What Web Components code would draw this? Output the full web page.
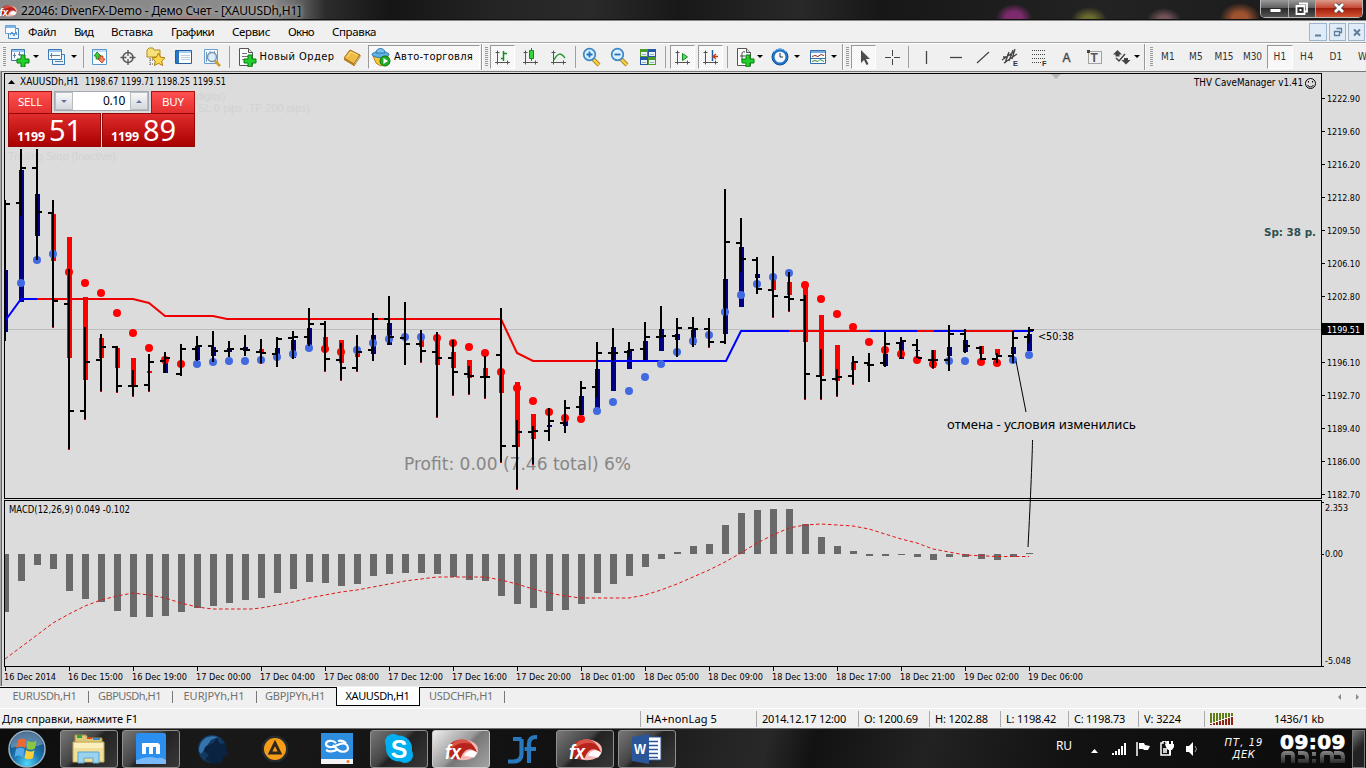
<!DOCTYPE html>
<html lang="ru">
<head>
<meta charset="utf-8">
<title>22046: DivenFX-Demo</title>
<style>
  body {
    margin: 0;
    width: 1366px;
    height: 768px;
    overflow: hidden;
    background: #f0f0f0;
    font: 12px "Noto Sans", "Open Sans", sans-serif;
    color: #000;
  }
</style>
</head>
<body>
<terminal-window></terminal-window>
<script>
// Text set to an exact advance width
class FitLabel extends HTMLElement {
  constructor() {
    super();
    this.attachShadow({mode: 'open'});
    this.shadowRoot.innerHTML = `
      <style>
        :host { display: inline-block; white-space: nowrap; }
        span { display: inline-block; }
      </style>
      <span><slot></slot></span>
    `;
  }

  connectedCallback() {
    const span = this.shadowRoot.querySelector('span');
    const wanted = parseFloat(this.getAttribute('w'));
    const count = this.textContent.length;
    this.style.width = wanted + 'px';
    const natural = span.getBoundingClientRect().width;
    span.style.letterSpacing = ((wanted - natural) / count).toFixed(3) + 'px';
  }
}
customElements.define('fit-label', FitLabel);

const plus = '<path d="M11 8h4v4h4v4h-4v4h-4v-4H7v-4h4z" fill="#22d02c" stroke="#087d10"/>';
const axes = '<path d="M4.500 3.500v14M2.500 5.500h4M2 15.500h15M14.500 13.500v4" fill="none" stroke="#555"/>';
const sheet = '<path d="M2.500 1.500h9l4 4v13h-13z" fill="#fff" stroke="#555"/><path d="M11.500 1.500v4h4" fill="#ddd" stroke="#555"/>';
const fxLogo = `
  <ellipse cx="20" cy="14" rx="16" ry="11" fill="#f4b9b5"/>
  <path d="M4 15C5-1 30-1 35 17c-7-7-14-4-17 5-4 4-12 3-14-7z" fill="#b8231b"/>
  <path d="M8 8c6-7 17-7 22 0-9-3-16-1-22 4z" fill="#d65348"/>
  <path d="M21 20c4-6 9-7 14-3l-3 5z" fill="#fff"/>
  <text x="1" y="24" font-family="Liberation Sans, sans-serif" font-size="21" font-style="italic" font-weight="bold" fill="#fff" textLength="17" lengthAdjust="spacingAndGlyphs">fx</text>`;

const ICONS = {
  chartNew: '<path d="M1.500 2.500h13v11h-13z" fill="#f5faff" stroke="#3b7ab8"/><path d="M2 3h12v2H2z" fill="#9cc6ea"/><path d="M4.500 6v5M3 8.500h3M9.500 5v4M8 7.500h3" stroke="#64819b"/>' + plus,
  profiles: '<path d="M5.500 7.500h12v10h-12z" fill="#e8f3fc" stroke="#3b7ab8"/><path d="M1.500 2.500h13v10h-13z" fill="#f5faff" stroke="#3b7ab8"/><path d="M2 3h12v2H2z" fill="#9cc6ea"/><path d="M3 8.500h10M4.500 6v5M8 14.500h8" stroke="#64819b"/>',
  market: '<path d="M2.500 2.500h14v15h-14z" fill="#f8fcff" stroke="#5598d2"/><path d="M3 3h13v2H3z" fill="#c4def5"/><path d="M7 5l4 4H9v3H6V9H4z" fill="#3ecb38" stroke="#187c13" stroke-width=".8"/><path d="M12 16l-4-4h2V9h3v3h2z" fill="#f98b5c" stroke="#b43411" stroke-width=".8"/>',
  target: '<circle cx="10" cy="10.500" r="5" fill="none" stroke="#555" stroke-width="1.500"/><path d="M10 3v6M10 12v6M2.500 10.500h6M11.500 10.500h6" stroke="#555" stroke-width="1.300"/>',
  star: '<path d="M1 3l2-2h4l1 2h6v7H1z" fill="#f7e17a" stroke="#b28d20"/><path d="M4 11v7M4 13h5M4 17h5" stroke="#555" stroke-dasharray="1 1"/><path d="M12.500 6l2 4.200 4.500.6-3.300 3.200.9 4.500-4.100-2.200-4.100 2.200.9-4.500L6 10.800l4.500-.6z" fill="#ffd84a" stroke="#ad7e0b"/>',
  navigator: '<path d="M1.500 3.500h16v13h-16z" fill="#fff" stroke="#225e9d"/><path d="M2 4h3v12H2z" fill="#2c77c4"/><path d="M5 4h12v2H5z" fill="#a5cef1"/><path d="M7 8.500h9M7 10.500h9M7 12.500h9" stroke="#b8cfe6"/>',
  tester: '<path d="M2.500 2.500h13v14h-13z" fill="#f3f9ff" stroke="#6aa0cf"/><path d="M4.500 5v10M8 4v6M12.500 4v7" stroke="#7799bb"/><circle cx="10" cy="10" r="4.500" fill="#d9edfb" fill-opacity=".85" stroke="#7895ad" stroke-width="1.500"/><path d="M13 14l5 5" stroke="#d19b29" stroke-width="2.500"/>',
  order: sheet + '<path d="M5 6.500h5M5 9.500h6M5 12.500h4" stroke="#777"/>' + plus,
  book: '<path d="M2 11L8 3l10 5-6 9z" fill="#eebb45" stroke="#9a6a13"/><path d="M2 11l10 6v2L2 13z" fill="#b57d1c"/><path d="M12 17l6-9v2l-6 9z" fill="#fff0c0" stroke="#9a6a13" stroke-width=".7"/><path d="M5 10l4-5 6 3" fill="none" stroke="#ffe08b"/>',
  auto: '<path d="M2 9h15l-2 7-5 3-5-3z" fill="#f3c83f" stroke="#b4871b"/><ellipse cx="9.500" cy="7.500" rx="8.500" ry="3" fill="#62b0e5" stroke="#2c78b2"/><path d="M5 6c0-6 9-6 9 0z" fill="#7bc3ef" stroke="#2c78b2"/><circle cx="14" cy="14" r="5" fill="#1fae26" stroke="#0b7411"/><path d="M12.500 11v6l4.500-3z" fill="#fff"/>',
  bars: axes + '<path d="M10.500 4v10M8 11.500h3M11 6.500h3" stroke="#138a21" stroke-width="1.500" fill="none"/>',
  candle: axes + '<path d="M10.500 1v13" stroke="#138a21"/><path d="M8.500 3.500h4v8h-4z" fill="#35d43d" stroke="#138a21"/>',
  line: axes + '<path d="M5 13c4-8 7-7 11-2" stroke="#2b9c37" stroke-width="1.500" fill="none"/>',
  zoomIn: '<path d="M11 12l6 6" stroke="#9d7113" stroke-width="4"/><path d="M11 12l6 6" stroke="#f5cf3d" stroke-width="2.500"/><circle cx="7.500" cy="7.500" r="5.800" fill="#d8f0ff" stroke="#3b86c7" stroke-width="1.700"/><path d="M4.500 7.500h6M7.500 4.500v6" stroke="#2471bd" stroke-width="1.800"/>',
  zoomOut: '<path d="M11 12l6 6" stroke="#9d7113" stroke-width="4"/><path d="M11 12l6 6" stroke="#f5cf3d" stroke-width="2.500"/><circle cx="7.500" cy="7.500" r="5.800" fill="#d8f0ff" stroke="#3b86c7" stroke-width="1.700"/><path d="M4.500 7.500h6" stroke="#2471bd" stroke-width="1.800"/>',
  tile: '<path d="M2 2h8v8H2zM10 10h8v8h-8z" fill="#4d9b26"/><path d="M10 2h8v8h-8zM2 10h8v8H2z" fill="#2458aa"/><path d="M3 5h6v4H3zM11 5h6v4h-6zM3 13h6v4H3zM11 13h6v4h-6z" fill="#e8f1f8"/><path d="M4 7.500h4M12 7.500h4M4 15.500h4M12 15.500h4" stroke="#9ab1c8"/>',
  scroll: axes + '<path d="M9.500 6.500v7l5-3.500z" fill="#65d568" stroke="#138a21"/>',
  shift: axes + '<path d="M11.500 3v11" stroke="#225e9d" stroke-width="1.500"/><path d="M12 9.500h5M15 7l-3 2.500 3 2.500" stroke="#c03b16" fill="none" stroke-width="1.300"/>',
  indicators: sheet + '<path d="M10 5c-3-1-3 1-3 3v6M5 9h5" stroke="#444" fill="none"/>' + plus,
  clock: '<circle cx="10" cy="10" r="8" fill="#1f72c6" stroke="#12539c"/><circle cx="10" cy="10" r="5.500" fill="#f2f8fd"/><path d="M10 6v4h3" stroke="#333" fill="none"/><path d="M4 5c3-4 9-4 12 0" stroke="#76bdf4" fill="none"/>',
  template: '<path d="M2.500 3.500h15v13h-15z" fill="#fff" stroke="#2f6dab"/><path d="M3 4h14v2H3z" fill="#76abe0"/><path d="M4 9.500l3-1 3 1 3-2 3 1" stroke="#8e3022" fill="none"/><path d="M3 11.500h14" stroke="#2f6dab"/><path d="M4 14.500l3-1 3 1 2-2 4 2" stroke="#268b39" fill="none"/>',
  cursor: '<path d="M7 3v13l3-3 2.500 5 2-1-2.500-5h4z" fill="#4c4c4c"/>',
  cross: '<path d="M10.500 3v6M10.500 12v6M3 10.500h6M12 10.500h6" stroke="#444"/>',
  vline: '<path d="M10.500 4v13" stroke="#444" stroke-width="1.300"/>',
  hline: '<path d="M4 10.500h12" stroke="#444" stroke-width="1.300"/>',
  trend: '<path d="M4 16L16 5" stroke="#444" stroke-width="1.200"/>',
  channel: '<path d="M1 13L14 4M3 16L16 7M4 16L8 5M8 14L12 3M11 12L14 2M2 10h5M6 8h5" stroke="#444" stroke-width="1.300"/><text x="12" y="19" font-family="Liberation Sans, sans-serif" font-size="7.500" font-weight="bold" fill="#333">E</text>',
  fibo: '<path d="M3 3.500h14M3 7.500h14M3 11.500h14M3 15.500h9" stroke="#444" stroke-dasharray="1 1"/><text x="13" y="19" font-family="Liberation Sans, sans-serif" font-size="7.500" font-weight="bold" fill="#333">F</text>',
  letter: '<text x="5.500" y="15" font-family="Liberation Sans, sans-serif" font-size="13" stroke="#444" stroke-width=".4" textLength="8" lengthAdjust="spacingAndGlyphs" fill="#444">A</text>',
  textBox: '<path d="M3.500 4.500h13v12h-13z" fill="none" stroke="#555" stroke-dasharray="1 1"/><path d="M2 3h3v3H2z" fill="#444"/><text x="5.500" y="15" font-family="Liberation Sans, sans-serif" font-size="12" font-weight="bold" fill="#555" textLength="9">T</text>',
  arrows: '<path d="M5.500 3L10 7.500H7.500v2h-4v-2H1z" fill="#444"/><path d="M14 17.500L9.500 13H12v-2h4v2h2.500z" fill="#444"/><path d="M4 11l3 3 6-7" fill="none" stroke="#444" stroke-width="1.500"/>'
};

class ToolButton extends HTMLElement {
  constructor() {
    super();
    this.attachShadow({mode: 'open'});
    const icon = ICONS[this.getAttribute('icon')];
    this.shadowRoot.innerHTML = `
      <style>
        :host {
          display: flex;
          flex: none;
          align-items: center;
          justify-content: center;
          box-sizing: border-box;
          height: 24px;
          width: ${this.getAttribute('w')}px;
        }
        :host([pressed]) {
          background: repeating-conic-gradient(#fff 0 25%, #f1f1f1 0 50%) 0 0 / 2px 2px;
          border: 1px solid #fff;
          border-top-color: #999;
          border-left-color: #999;
        }
        svg { flex: none; display: block; }
      </style>
      ${icon ? `<svg width="20" height="20" viewBox="0 0 20 20">${icon}</svg>` : ''}
      <slot></slot>
    `;
  }
}

class ToolSeparator extends HTMLElement {
  constructor() {
    super();
    this.attachShadow({mode: 'open'});
    this.shadowRoot.innerHTML = `
      <style>
        :host { display: flex; flex: none; justify-content: center; align-items: center; width: ${this.getAttribute('w') || 8}px; height: 24px; }
        i { flex: none; width: 1px; height: 22px; background: #a0a0a0; }
        :host([kind="grip"]) i { width: 3px; height: 19px; background: repeating-linear-gradient(#999 0 1px, #f0f0f0 1px 2px); }
        :host([kind="arrow"]) i { width: 0; height: 0; background: none; border: 3px solid transparent; border-top: 3px solid #000; border-bottom: 0; }
        :host([kind="end"]) i { height: 26px; background: #999; border-right: 1px solid #fff; }
      </style>
      <i></i>
    `;
  }
}

class ToolBar extends HTMLElement {
  constructor() {
    super();
    this.attachShadow({mode: 'open'});
    this.shadowRoot.innerHTML = `
      <style>
        :host {
          display: flex;
          align-items: center;
          box-sizing: border-box;
          height: 28px;
          width: 1366px;
          padding-bottom: 2px;
          overflow: hidden;
          background: #f0f0f0;
          border-top: 1px solid #fff;
          font: 11px "DejaVu Sans Condensed", "DejaVu Sans", sans-serif;
        }
        .tf { color: #333; font-size: 10px; }
      </style>
      <tool-separator kind="grip" w="8"></tool-separator>
      <tool-button icon="chartNew" w="23"></tool-button>
      <tool-separator kind="arrow" w="9"></tool-separator>
      <tool-button icon="profiles" w="33"></tool-button>
      <tool-separator kind="arrow" w="1"></tool-separator>
      <tool-separator w="18"></tool-separator>
      <tool-button icon="market" w="15"></tool-button>
      <tool-button icon="target" w="42"></tool-button>
      <tool-button icon="star" w="14"></tool-button>
      <tool-button icon="navigator" w="42"></tool-button>
      <tool-button icon="tester" w="14"></tool-button>
      <tool-separator w="20"></tool-separator>
      <tool-button icon="order" w="16"></tool-button>
      <tool-button w="84"><fit-label w="75">Новый Ордер</fit-label></tool-button>
      <tool-button icon="book" w="25"></tool-button>
      <tool-button icon="auto" w="112" pressed style="margin-left:4px"><fit-label w="79" style="margin:0 4px 0 3px">Авто-торговля</fit-label></tool-button>
      <tool-separator kind="end" w="3"></tool-separator>
      <tool-separator kind="grip" w="6"></tool-separator>
      <tool-button icon="bars" w="25" pressed style="margin-left:1px"></tool-button>
      <tool-button icon="candle" w="31"></tool-button>
      <tool-button icon="line" w="26"></tool-button>
      <tool-separator w="7"></tool-separator>
      <tool-button icon="zoomIn" w="26"></tool-button>
      <tool-button icon="zoomOut" w="30"></tool-button>
      <tool-button icon="tile" w="26"></tool-button>
      <tool-separator w="8"></tool-separator>
      <tool-button icon="scroll" w="25" pressed style="margin-left:1px"></tool-button>
      <tool-button icon="shift" w="25" pressed style="margin-left:3px"></tool-button>
      <tool-separator w="8"></tool-separator>
      <tool-button icon="indicators" w="27"></tool-button>
      <tool-separator kind="arrow" w="3"></tool-separator>
      <tool-button icon="clock" w="38"></tool-button>
      <tool-separator kind="arrow" w="1" style="margin-left:-3px"></tool-separator>
      <tool-button icon="template" w="42"></tool-button>
      <tool-separator kind="arrow" w="1" style="margin-left:-6px"></tool-separator>
      <tool-separator kind="end" w="17"></tool-separator>
      <tool-separator kind="grip" w="6" style="margin-left:-7px"></tool-separator>
      <tool-button icon="cursor" w="25" pressed style="margin-left:1px"></tool-button>
      <tool-button icon="cross" w="32"></tool-button>
      <tool-separator w="1"></tool-separator>
      <tool-button icon="vline" w="33"></tool-button>
      <tool-button icon="hline" w="27"></tool-button>
      <tool-button icon="trend" w="28"></tool-button>
      <tool-button icon="channel" w="28"></tool-button>
      <tool-button icon="fibo" w="28"></tool-button>
      <tool-button icon="letter" w="28"></tool-button>
      <tool-button icon="textBox" w="28"></tool-button>
      <tool-button icon="arrows" w="26"></tool-button>
      <tool-separator kind="arrow" w="3"></tool-separator>
      <tool-separator kind="end" w="14"></tool-separator>
      <tool-separator kind="grip" w="6" style="margin-left:-4px"></tool-separator>
      <tool-button class="tf" w="28"><fit-label w="14">M1</fit-label></tool-button>
      <tool-button class="tf" w="28"><fit-label w="14">M5</fit-label></tool-button>
      <tool-button class="tf" w="28"><fit-label w="19">M15</fit-label></tool-button>
      <tool-button class="tf" w="29"><fit-label w="19">M30</fit-label></tool-button>
      <tool-button class="tf" w="26" pressed><fit-label w="13">H1</fit-label></tool-button>
      <tool-button class="tf" w="28"><fit-label w="14">H4</fit-label></tool-button>
      <tool-button class="tf" w="30"><fit-label w="13">D1</fit-label></tool-button>
      <tool-button class="tf" w="28"><fit-label w="14">W1</fit-label></tool-button>
    `;
  }
}

class TitleBar extends HTMLElement {
  constructor() {
    super();
    this.attachShadow({mode: 'open'});
    this.shadowRoot.innerHTML = `
      <style>
        :host {
          display: flex;
          align-items: flex-start;
          height: 20px;
          border-bottom: 1px solid #888;
          box-shadow: inset 0 -1px #111;
          background:
            radial-gradient(ellipse 18px 14px at 1014px 18px, #7d2a6d 45%, transparent),
            radial-gradient(ellipse 18px 13px at 1089px 20px, #6b6b2e 30%, transparent),
            radial-gradient(ellipse 17px 12px at 1164px 20px, #74545a 30%, transparent),
            radial-gradient(ellipse 20px 15px at 1240px 18px, #a0532f 35%, transparent),
            radial-gradient(ellipse 30px 8px at 190px 20px, #aa7c74, transparent),
            linear-gradient(90deg, #888 0, #8b8b8b 270px, #6b6b6b 295px, #2c2c2c 325px, #151515 390px, #252525 500px, #2a2a2a 590px, #181818 680px, #292929 800px, #171717 880px, #232323 1100px, #191919);
          overflow: hidden;
        }
        .logo { margin: 4px 4px 0 -1px; }
        .name { flex: 1; line-height: 21px; font-size: 12px; text-shadow: 0 0 4px #bbb, 0 0 6px #aaa; }
        .controls {
          display: flex;
          height: 17px;
          margin: 0 3px 0 0;
          border: 1px solid #b8b8b8;
          border-top: 0;
          border-radius: 0 0 5px 5px;
          overflow: hidden;
        }
        .controls svg { display: block; background: linear-gradient(#999, #606060 45%, #292929 50%, #555); border-right: 1px solid #aaa; }
        .controls svg.close { background: linear-gradient(#dc9b8b, #c54a35 45%, #a31d0c 50%, #d15333); border: 0; }
      </style>
      <svg class="logo" width="18" height="13" viewBox="0 0 36 26">${fxLogo}</svg>
      <div class="name"><fit-label w="280">22046: DivenFX-Demo - Демо Счет - [XAUUSDh,H1]</fit-label></div>
      <div class="controls">
        <svg width="27" height="17"><rect x="9.500" y="9" width="10" height="3" fill="#fff"/></svg>
        <svg width="26" height="17"><path d="M10 3.500h8v8h-2M7.500 6h8v8h-8z" fill="none" stroke="#fff" stroke-width="1.800"/><path d="M10.500 9h2v2h-2z" fill="#fff"/></svg>
        <svg class="close" width="46" height="17"><path d="M19 4l8 8M27 4l-8 8" stroke="#444" stroke-width="4.500"/><path d="M19 4l8 8M27 4l-8 8" stroke="#fff" stroke-width="2.800"/></svg>
      </div>
    `;
  }
}

class MenuBar extends HTMLElement {
  constructor() {
    super();
    this.attachShadow({mode: 'open'});
    this.shadowRoot.innerHTML = `
      <style>
        :host {
          display: flex;
          align-items: center;
          box-sizing: border-box;
          height: 22px;
          background: #f0f0f0;
          border-bottom: 1px solid #a5a5a5;
          font-size: 11.500px;
        }
        nav { display: flex; gap: 18px; flex: 1; margin-left: 8px; }
        .mdi { display: flex; gap: 2px; margin-right: 1px; }
        .mdi svg { box-sizing: border-box; border: 1px solid #9db5ca; background: #dfecf8; }
      </style>
      <svg width="16" height="16" viewBox="0 0 16 16" style="margin-left:4px"><path d="M4.500 4.500h10v10h-10z" fill="#eef6fd" stroke="#4a87bd"/><path d="M1.500 1.500h10v8h-10z" fill="#f8fbff" stroke="#69a4d8"/><path d="M2 2h9v2H2z" fill="#7eb5e5"/><path d="M6 11l2-3 2 4 2-4 1 3" fill="none" stroke="#4a87bd"/></svg>
      <nav>
        <fit-label w="28">Файл</fit-label>
        <fit-label w="19">Вид</fit-label>
        <fit-label w="42">Вставка</fit-label>
        <fit-label w="43">Графики</fit-label>
        <fit-label w="38">Сервис</fit-label>
        <fit-label w="26">Окно</fit-label>
        <fit-label w="44">Справка</fit-label>
      </nav>
      <div class="mdi">
        <svg width="18" height="18"><path d="M5 11.500h6" stroke="#607d99" stroke-width="2"/></svg>
        <svg width="17" height="18"><path d="M6.500 4.500h5v4h-2M4.500 7.500h5v4h-5z" stroke="#607d99" stroke-width="1.300" fill="none"/></svg>
        <svg width="17" height="18"><path d="M5 5.500l6 6M11 5.500l-6 6" stroke="#607d99" stroke-width="2"/></svg>
      </div>
    `;
  }
}

// [high, low, open, close, body top, body bottom, body colour, dot, dot colour] in pixels
const N = '#000080', R = '#ff0000', B = '#4169e1';
const BARS = [
  [200, 341, null, 204, 270, 332, N, null, B], [149, 216, 203, 168, 170, 302, N, 283, B],
  [149, 260, 168, 212, 194, 236, N, 260, B], [200, 327, 213, 301, 214, 261, R, 254, B],
  [269, 449, 304, 411, 237, 358, R, 272, R], [327, 419, 411, 362, 297, 380, R, 283, R],
  [334, 391, 360, 347, 338, 358, R, 293, R], [346, 392, 347, 386, 348, 368, R, 313, R],
  [370, 396, 386, 386, 358, 385, R, 333, R], [354, 391, 385, 362, 371, 373, R, 348, R],
  [352, 373, 361, 358, 362, 373, N, 360, R], [344, 376, 374, 349, 0, 0, N, 364, R],
  [336, 361, 349, 346, 346, 360, N, 364, B], [331, 362, 346, 351, 347, 356, N, 362, B],
  [341, 357, 351, 349, 348, 352, N, 361, B], [335, 356, 349, 350, 347, 351, N, 361, B],
  [339, 363, 352, 353, 349, 353, R, 360, B], [337, 367, 354, 339, 348, 356, N, 357, B],
  [331, 359, 338, 337, 340, 358, N, 354, B], [308, 346, 337, 324, 328, 346, N, 348, B],
  [321, 371, 324, 359, 337, 346, R, 349, R], [343, 380, 360, 368, 340, 363, R, 352, R],
  [335, 371, 368, 352, 352, 357, R, 350, B], [313, 361, 350, 319, 335, 354, N, 343, B],
  [296, 345, 319, 337, 323, 345, N, 339, B], [302, 365, 338, 344, 0, 0, N, 337, B],
  [330, 362, 344, 351, 340, 347, R, 337, B], [332, 417, 352, 358, 335, 365, R, 338, R],
  [340, 395, 358, 372, 352, 368, R, 343, R], [366, 394, 374, 376, 360, 378, R, 347, R],
  [356, 398, 377, 377, 368, 377, R, 353, R], [308, 462, 355, 446, 370, 393, R, 372, R],
  [420, 489, 446, 432, 382, 447, R, 388, R], [426, 464, 432, 431, 414, 439, R, 401, R],
  [408, 441, 431, 421, 425, 427, N, 412, R], [400, 433, 423, 408, 421, 426, N, 418, R],
  [381, 415, 407, 388, 396, 415, N, 419, R], [342, 397, 387, 353, 369, 408, N, 411, B],
  [328, 361, 353, 353, 347, 391, N, 402, B], [342, 357, 352, 350, 350, 369, N, 391, B],
  [322, 360, 349, 337, 341, 361, N, 377, B], [306, 338, 337, 336, 329, 351, N, 364, B],
  [318, 357, 336, 328, 334, 340, N, 352, B], [317, 347, 328, 329, 330, 345, N, 341, B],
  [318, 347, 329, 342, 0, 0, R, 335, B], [189, 344, 342, 242, 279, 334, N, 312, B],
  [218, 272, 243, 259, 247, 307, N, 295, B], [257, 294, 260, 289, 274, 278, N, 284, B],
  [256, 317, 290, 296, 280, 290, R, 277, B], [272, 311, 297, 299, 282, 295, R, 273, B],
  [295, 399, 300, 374, 286, 342, R, 285, R], [349, 399, 376, 380, 315, 376, R, 299, R],
  [369, 396, 379, 377, 345, 381, R, 314, R], [356, 384, 376, 362, 362, 370, R, 327, R],
  [353, 382, 363, 365, 364, 366, N, 342, R], [332, 367, 363, 344, 354, 366, N, 350, R],
  [337, 359, 343, 341, 342, 359, N, 354, R], [339, 358, 345, 358, 350, 351, N, 360, R],
  [350, 368, 360, 360, 350, 368, R, 364, R], [325, 371, 360, 334, 347, 356, N, 361, B],
  [329, 353, 334, 346, 340, 352, N, 361, B], [346, 360, 348, 359, 346, 354, R, 362, R],
  [353, 363, 359, 356, 349, 355, R, 363, R], [331, 363, 356, 338, 347, 354, N, 360, B],
  [327, 343, 337, 330, 334, 351, N, 355, B]
];

const MACD = [
  612, 581, 565, 569, 591, 599, 602, 611, 617, 617, 616, 612, 608, 606, 603, 600, 598, 593, 589, 582, 583, 586,
  584, 576, 574, 573, 573, 574, 577, 580, 581, 596, 604, 608, 611, 610, 604, 593, 584, 576, 567, 559, 552, 546,
  544, 525, 513, 510, 509, 509, 524, 537, 546, 551, 556, 556, 555, 557, 560, 557, 557, 559, 560, 557, 553
];

const SIGNAL = '5,659 21,647 37,635 53,623 69,614 85,606 101,600 117,596 133,593 149,595 165,598 181,603 197,607 213,609 251,609 261,608 277,605 293,602 309,598 325,595 341,592 357,590 373,587 389,584 405,581 421,579 437,577 485,577 501,580 517,584 533,589 549,593 565,596 581,598 629,598 645,595 661,590 677,584 693,577 709,570 725,562 741,553 757,543 773,535 789,528 805,525 821,524 837,525 853,526 869,529 885,534 901,539 917,543 933,549 949,552 965,555 997,556.500 1029,556.500';

const AVERAGE = [
  ['#0000ff', '5,321 21,299 38,299'],
  ['#e00', '37,299 133,299 149,303 165,316 213,316 227,319 501,319 517,353 533,361 597,361'],
  ['#0000ff', '597,361 726,361 741,331 789,331'], ['#e00', '789,331 870,331'], ['#0000ff', '870,331 917,331'],
  ['#e00', '917,331 934,331'], ['#0000ff', '934,331 965,331'], ['#e00', '965,331 1013,331'], ['#0000ff', '1013,331 1033,331']
];

const PRICES = [[98, '1222.90'], [131, '1219.60'], [164, '1216.20'], [197, '1212.80'], [230, '1209.50'], [263, '1206.10'],
  [296, '1202.80'], [362, '1196.10'], [395, '1192.70'], [428, '1189.40'], [461, '1186.00'], [494, '1182.70']];

const TIMES = ['16 Dec 2014', '16 Dec 15:00', '16 Dec 19:00', '17 Dec 00:00', '17 Dec 04:00', '17 Dec 08:00', '17 Dec 12:00',
  '17 Dec 16:00', '17 Dec 20:00', '18 Dec 01:00', '18 Dec 05:00', '18 Dec 09:00', '18 Dec 13:00', '18 Dec 17:00',
  '18 Dec 21:00', '19 Dec 02:00', '19 Dec 06:00'];

class TradePanel extends HTMLElement {
  constructor() {
    super();
    this.attachShadow({mode: 'open'});
    this.shadowRoot.innerHTML = `
      <style>
        :host { display: grid; grid-template-columns: 93px 93px; column-gap: 1px; width: 187px; height: 56px; color: #fff; position: relative; font-family: "Noto Sans", sans-serif; }
        .side { display: flex; flex-direction: column; }
        .side.buy { align-items: flex-end; }
        .tab {
          box-sizing: border-box;
          width: 44px;
          height: 22px;
          line-height: 19px;
          text-align: center;
          font-size: 11.500px;
          background: linear-gradient(#ff5050, #e32f2f);
          border: 1px solid #a81111;
          border-bottom: 0;
        }
        .price {
          box-sizing: border-box;
          width: 93px;
          height: 34px;
          display: flex;
          align-items: flex-end;
          padding-left: 8px;
          gap: 4px;
          background: linear-gradient(#e02c2c, #a90000);
          border: 1px solid #960808;
        }
        .small { font-size: 12.500px; font-weight: bold; line-height: 18px; }
        .big { font-size: 29px; line-height: 32px; }
        .volume {
          position: absolute;
          left: 46px;
          top: 0;
          display: flex;
          box-sizing: border-box;
          width: 95px;
          height: 20px;
          border: 1px solid #a4aab2;
          background: #fff;
          color: #000;
        }
        .spin { width: 18px; display: flex; align-items: center; justify-content: center; background: linear-gradient(#f8f8f8, #d5d8dd); border: 1px solid #b8bdc4; box-sizing: border-box; }
        .lot { flex: 1; text-align: right; line-height: 18px; padding-right: 5px; }
      </style>
      <div class="side">
        <div class="tab"><fit-label w="24">SELL</fit-label></div>
        <div class="price"><fit-label class="small" w="28">1199</fit-label><fit-label class="big" w="33">51</fit-label></div>
      </div>
      <div class="side buy">
        <div class="tab"><fit-label w="22">BUY</fit-label></div>
        <div class="price"><fit-label class="small" w="28">1199</fit-label><fit-label class="big" w="33">89</fit-label></div>
      </div>
      <div class="volume">
        <div class="spin"><svg width="6" height="3"><path d="M0 0h6L3 3z" fill="#6671a8"/></svg></div>
        <div class="lot"><fit-label w="22">0.10</fit-label></div>
        <div class="spin"><svg width="6" height="3"><path d="M0 3h6L3 0z" fill="#6671a8"/></svg></div>
      </div>
    `;
  }
}

class PriceChart extends HTMLElement {
  constructor() {
    super();
    this.attachShadow({mode: 'open'});
    this.shadowRoot.innerHTML = `
      <style>
        :host { display: block; position: relative; height: 616px; background: #dcdcdc; font-family: "DejaVu Sans Condensed", "DejaVu Sans", sans-serif; }
        svg { display: block; }
        .axis text { font-size: 9.500px; }
        .ghost text { font: 11px "Liberation Sans", sans-serif; fill: #d2d2d2; }
        trade-panel { position: absolute; left: 8px; top: 20px; }
      </style>
      <svg width="1366" height="616" viewBox="0 71 1366 616">
        <g shape-rendering="crispEdges">
          <path d="M0 71h1366v1H0z" fill="#777"/>
          <path d="M0 71h1v616H0z" fill="#aaa"/>
          <path d="M1 71h1v616H1z" fill="#666"/>
          <path d="M5 329.500h1316" stroke="#bdbdbd"/>
        </g>
        <path d="M1051 74h10l-5 5z" fill="#b5b5b5"/>
        ${this.drawGhosts()}
        <text x="404" y="470" font-size="17" fill="#868686" textLength="227" lengthAdjust="spacingAndGlyphs">Profit: 0.00 (7.46 total) 6%</text>
        <g shape-rendering="crispEdges">${this.drawBodies()}</g>
        ${this.drawAverage()}
        ${this.drawDots()}
        <g shape-rendering="crispEdges">${this.drawBars()}${this.drawMacd()}</g>
        <polyline points="${SIGNAL}" fill="none" stroke="#e01616" stroke-dasharray="3.500 2.500"/>
        <path d="M1016 361l10 51M1032.500 440c0 10-2 60-4.500 107" fill="none" stroke="#000"/>
        <g shape-rendering="crispEdges" fill="none" stroke="#000">
          <path d="M4.500 73.500h1317v425h-1317zM4.500 500.500h1317v166h-1317z"/>
        </g>
        <g class="axis">${this.drawAxis()}</g>
        <path d="M8 84h7l-3.500-4z"/>
        <text x="20" y="85" font-size="10" textLength="59" lengthAdjust="spacingAndGlyphs">XAUUSDh,H1</text>
        <text x="85" y="85" font-size="10" textLength="141" lengthAdjust="spacingAndGlyphs">1198.67 1199.71 1198.25 1199.51</text>
        <text x="9" y="513" font-size="10" textLength="121" lengthAdjust="spacingAndGlyphs">MACD(12,26,9) 0.049 -0.102</text>
        <text x="1194" y="86" font-size="10" textLength="109" lengthAdjust="spacingAndGlyphs">THV CaveManager v1.41</text>
        <g fill="none" stroke="#000"><circle cx="1310.500" cy="83.500" r="5"/><path d="M1307.500 85c1.500 2.500 4.500 2.500 6 0M1308.500 81v1.500M1312.500 81v1.500"/></g>
        <text x="1264" y="236" font-family="DejaVu Sans, sans-serif" font-weight="bold" font-size="10.500" fill="#2f4f4f" textLength="52" lengthAdjust="spacingAndGlyphs">Sp: 38 p.</text>
        <text x="1038" y="340" font-size="10.500" textLength="36" lengthAdjust="spacingAndGlyphs">&lt;50:38</text>
        <text x="947" y="429" font-family="Noto Sans, sans-serif" font-size="13" textLength="189" lengthAdjust="spacingAndGlyphs">отмена - условия изменились</text>
        <path d="M0 686h1366v1H0z" fill="#eee"/>
      </svg>
      <trade-panel></trade-panel>
    `;
  }

  drawGhosts() {
    return `<g class="ghost">
      <text x="196" y="100">digits)</text>
      <text x="198" y="112" textLength="112">SL 0 pips ,TP 200 pips)</text>
      <text x="8" y="160" textLength="108">Trailing Stop (Inactive)</text>
    </g>`;
  }

  drawBodies() {
    return BARS.map((b, i) => {
      const x = i === 0 ? 5 : 3 + 16 * i;
      return `<rect x="${x}" y="${b[4]}" width="${i === 0 ? 3 : 5}" height="${b[5] - b[4]}" fill="${b[6]}"/>`;
    }).join('');
  }

  drawAverage() {
    return AVERAGE.map(([color, points]) =>
      `<polyline points="${points}" fill="none" stroke="${color}" stroke-width="2"/>`).join('');
  }

  drawDots() {
    return BARS.map((b, i) => b[7] ? `<circle cx="${5 + 16 * i}" cy="${b[7]}" r="4" fill="${b[8]}"/>` : '').join('');
  }

  drawBars() {
    return BARS.map(([high, low, open, close, , , color], i) => {
      const x = 4 + 16 * i;
      let d = `M${x} ${high}h2v${low - high}h-2z`;
      if (open) d += `M${x - 4} ${open - 1}h4v2h-4z`;
      d += `M${x + 2} ${close - 1}h4v2h-4z`;
      return `<path d="${d}"/>` + (color === R ? `<path d="M${x} ${low}h2v1h-2z" fill="#c00"/>` : '');
    }).join('');
  }

  drawMacd() {
    return MACD.map((y, i) => {
      const x = i === 0 ? 5 : 2 + 16 * i;
      const top = Math.min(y, 554);
      return `<rect x="${x}" y="${top}" width="${i === 0 ? 4 : 7}" height="${Math.max(1, Math.abs(y - 554))}" fill="#696969"/>`;
    }).join('');
  }

  drawAxis() {
    const prices = PRICES.map(([y, label]) => `
      <path d="M1322 ${y + .5}h3" stroke="#000"/>
      <text x="1327" y="${y + 4}" textLength="33" lengthAdjust="spacingAndGlyphs">${label}</text>`).join('');
    const times = TIMES.map((label, i) => `
      <path d="M${5.5 + 64 * i} 667v4" stroke="#000"/>
      <text x="${4 + 64 * i}" y="680" textLength="${i ? 55 : 52}" lengthAdjust="spacingAndGlyphs">${label}</text>`).join('');
    return prices + times + `
      <rect x="1322" y="323" width="42" height="12"/>
      <text x="1327" y="332.500" fill="#fff" textLength="33" lengthAdjust="spacingAndGlyphs">1199.51</text>
      <path d="M1322 502.500h2M1322 554.500h2M1322 666.500h2" stroke="#000"/>
      <text x="1325" y="511" textLength="23" lengthAdjust="spacingAndGlyphs">2.353</text>
      <text x="1325" y="557" textLength="18" lengthAdjust="spacingAndGlyphs">0.00</text>
      <text x="1325" y="664" textLength="26" lengthAdjust="spacingAndGlyphs">-5.048</text>`;
  }
}

class ChartTabs extends HTMLElement {
  constructor() {
    super();
    this.attachShadow({mode: 'open'});
    this.shadowRoot.innerHTML = `
      <style>
        :host { display: flex; box-sizing: border-box; height: 21px; border-top: 1px solid #000; background: #f0f0f0; color: #707070; font-size: 11px; }
        .tab { display: flex; box-sizing: border-box; height: 18px; line-height: 16px; justify-content: center; position: relative; }
        .tab:not(.on)::after { content: ""; position: absolute; right: 0; top: 3px; height: 12px; border-right: 1px solid #777; }
        .tab.before::after { display: none; }
        .on { background: #fff; color: #000; border: solid #000; border-width: 0 1px 1px; height: 19px; margin-top: -1px; line-height: 18px; }
        .nav { margin: 5px 0 0 auto; }
      </style>
      <div class="tab" style="width:89px"><fit-label w="64">EURUSDh,H1</fit-label></div>
      <div class="tab" style="width:84px;padding-right:3px"><fit-label w="63">GBPUSDh,H1</fit-label></div>
      <div class="tab" style="width:84px;padding-right:2px"><fit-label w="61">EURJPYh,H1</fit-label></div>
      <div class="tab before" style="width:79px;padding-right:3px"><fit-label w="60">GBPJPYh,H1</fit-label></div>
      <div class="tab on" style="width:84px;padding-right:1px"><fit-label w="64">XAUUSDh,H1</fit-label></div>
      <div class="tab" style="width:85px;padding-right:3px"><fit-label w="64">USDCHFh,H1</fit-label></div>
      <svg class="nav" width="29" height="8"><path d="M4 1v6L1 4zM19 1v6l3-3z" fill="#888"/></svg>
    `;
  }
}

class StatusBar extends HTMLElement {
  constructor() {
    super();
    this.attachShadow({mode: 'open'});
    const ramp = [...Array(8)].map((_, i) => `
      <path d="M${i * 3} 0h2v${10 - i}h-2z" fill="#5e7d12"/><path d="M${i * 3} ${11 - i}h2V12h-2z" fill="#8a2413"/>`).join('');
    this.shadowRoot.innerHTML = `
      <style>
        :host { display: flex; align-items: center; box-sizing: border-box; height: 20px; border-top: 1px solid #fff; background: #f0f0f0; font-size: 11px; }
        .cell { box-sizing: border-box; height: 16px; line-height: 16px; border-left: 1px solid #aaa; padding-left: 5px; white-space: nowrap; }
      </style>
      <div style="width:638px;padding-left:2px;box-sizing:content-box"><fit-label w="136">Для справки, нажмите F1</fit-label></div>
      <div class="cell" style="width:116px"><fit-label w="71">HA+nonLag 5</fit-label></div>
      <div class="cell" style="width:102px"><fit-label w="84">2014.12.17 12:00</fit-label></div>
      <div class="cell" style="width:71px"><fit-label w="54">O: 1200.69</fit-label></div>
      <div class="cell" style="width:71px"><fit-label w="53">H: 1202.88</fit-label></div>
      <div class="cell" style="width:68px"><fit-label w="50">L: 1198.42</fit-label></div>
      <div class="cell" style="width:70px"><fit-label w="51">C: 1198.73</fit-label></div>
      <div class="cell" style="width:66px"><fit-label w="37">V: 3224</fit-label></div>
      <div class="cell" style="width:70px"><svg width="24" height="12" style="margin-top:2px">${ramp}</svg></div>
      <fit-label w="50">1436/1 kb</fit-label>
    `;
  }
}

class TaskButton extends HTMLElement {
  constructor() {
    super();
    this.attachShadow({mode: 'open'});
    this.shadowRoot.innerHTML = `
      <style>
        :host { display: flex; flex: none; align-items: center; justify-content: center; box-sizing: border-box; width: 58px; height: 38px; margin-right: 4px; }
        :host([running]) { border: 1px solid #8f8f8f; border-radius: 3px; background: linear-gradient(135deg, #777 0, #444 42%, #222 50%, #383838); }
        :host([active]) { background: linear-gradient(135deg, #eee 0, #9a9a9a 48%, #777 55%, #a3a3a3); border-color: #ccc; }
      </style>
      <slot></slot>
    `;
  }
}

class TaskBar extends HTMLElement {
  constructor() {
    super();
    this.attachShadow({mode: 'open'});
    this.shadowRoot.innerHTML = `
      <style>
        :host {
          display: flex;
          align-items: center;
          box-sizing: border-box;
          width: 1366px;
          height: 40px;
          border-top: 1px solid #707070;
          background: linear-gradient(105deg, #0c0c0c 0, #191919 200px, #111 560px, #242424 700px, #282828 745px, #121212 790px, #222 900px, #121212 1040px, #0b0b0b);
          color: #fff;
        }
        svg { display: block; }
        .orb { width: 60px; display: flex; justify-content: center; box-sizing: border-box; padding-right: 6px; }
        .tray { display: flex; align-items: center; margin-left: auto; }
        .date { width: 50px; font: italic 11px/12px "DejaVu Sans Condensed", sans-serif; text-align: center; margin-right: 11px; }
        .clock { width: 66px; font: bold 20px/20px "DejaVu Sans", sans-serif; height: 31px; }
        .clock div { height: 18px; line-height: 18px; -webkit-text-stroke: .7px #fff; }
        .mirror { width: 66px; height: 14px; }
        .desk { box-sizing: border-box; width: 13px; height: 38px; margin: 0 1px 0 6px; border: 1px solid #777; background: linear-gradient(135deg, #777, #222 50%); }
      </style>
      <div class="orb">
        <svg width="40" height="38" viewBox="0 0 40 38">
          <defs>
            <radialGradient id="o" cx=".5" cy=".9" r=".9"><stop offset="0" stop-color="#52d8f7"/><stop offset=".4" stop-color="#1c79b4"/><stop offset="1" stop-color="#123b66"/></radialGradient>
          </defs>
          <circle cx="20" cy="19" r="18" fill="url(#o)" stroke="#9ab1c3" stroke-width="1.500"/>
          <path d="M4 14C8-2 32-2 36 14c-9 5-23 1-32 4z" fill="#fff" opacity=".28"/>
          <path d="M11 10c3-2 6-2 8 0l-1 8c-3-2-6-2-9 0z" fill="#ec6a31"/>
          <path d="M20.500 10.500c3 2 6 2 9 0l-1.500 8c-3 2-6 1.500-8.500 0z" fill="#8cc540"/>
          <path d="M9 19c3-2 6-2 8.500 0l-1.500 8c-3-2-6-2-8.500 0z" fill="#55a9e8"/>
          <path d="M19 20c3 2 6 2 8.500 0l-1.500 8c-3 2-6 1.500-8.500 0z" fill="#fcce3b"/>
        </svg>
      </div>
      <task-button running>
        <svg width="34" height="30" viewBox="0 0 34 30">
          <path d="M3 1h11l2 3h14v21H3z" fill="#dcc678" stroke="#a99145"/><path d="M5 1h5v3H5z" fill="#2da33b"/><path d="M15 3h5v2h-5z" fill="#d3402b"/><path d="M21 4h7v2h-7z" fill="#3389c9"/>
          <path d="M1 8h31v20H1z" fill="#f1df99" stroke="#c4ab5b"/><path d="M2 9h29v5H2z" fill="#fbf0bd"/>
          <path d="M6 29V18h21v11h-6v-5h-9v5z" fill="#9bd2ef" stroke="#5ba6cc"/>
        </svg>
      </task-button>
      <task-button running>
        <svg width="30" height="31" viewBox="0 0 30 31"><rect width="30" height="31" rx="2" fill="#2b8ff0"/><path d="M6 21V10h15q3 0 3 3v8h-4v-7h-3v7h-4v-7h-3v7z" fill="#fff"/><path d="M0 27c3 0 5-2 7-2s4-1 8-1 5 2 8 1 4 1 7 2v4H0z" fill="#79b9fa"/></svg>
      </task-button>
      <task-button>
        <svg width="32" height="30" viewBox="0 0 32 30"><circle cx="15" cy="15" r="14" fill="#12395f"/><path d="M2 17C2 7 9 0 21 3l-7 3-5 7-5 7z" fill="#3474ab"/><path d="M8 13l8-4 4-5 3 6 6-1 1 8 1 4-4 1-3 7-7 1-9-4 4-5-5-4z" fill="#0b2340"/></svg>
      </task-button>
      <task-button>
        <svg width="30" height="30" viewBox="0 0 30 30"><circle cx="15" cy="15" r="14" fill="#252a2d" stroke="#10181c"/><circle cx="15" cy="15" r="11" fill="#f59c18"/><path d="M15 9l5 10H10z" fill="none" stroke="#302719" stroke-width="2.800"/></svg>
      </task-button>
      <task-button>
        <svg width="32" height="31" viewBox="0 0 32 31"><rect width="32" height="31" fill="#2f8de0"/><path d="M0 26h32v5H0z" fill="#f4f4f4"/><path d="M27 27v3M25.500 28.500h3" stroke="#f17b21" stroke-width="1.500"/><path d="M15 10C11 6 5 8 5 11s5 4 9 2l5-2c5-2 8 1 8 4 0 4-6 5-10 2l-5-5M5 17c3 2 8 2 12-1M17 8c3-1 6 0 8 2" fill="none" stroke="#fff" stroke-width="2.200"/></svg>
      </task-button>
      <task-button running>
        <svg width="30" height="31" viewBox="0 0 30 31"><circle cx="9" cy="9" r="8" fill="#00aff0"/><circle cx="21" cy="22" r="8" fill="#00aff0"/><circle cx="15" cy="15.500" r="13" fill="#00aff0"/><text x="15" y="24.500" text-anchor="middle" font-family="Liberation Sans, sans-serif" font-weight="bold" font-size="25" fill="#fff">S</text></svg>
      </task-button>
      <task-button running active><svg width="34" height="26" viewBox="0 0 36 26">${fxLogo}</svg></task-button>
      <task-button>
        <svg width="34" height="30" viewBox="0 0 34 30"><path d="M15.500 5v15q0 7.500-8 7.500H2M7 5h8.500M31 3h-1q-7 0-7 7v19M18.500 15H30" fill="none" stroke="#2878bd" stroke-width="4.200"/></svg>
      </task-button>
      <task-button running><svg width="34" height="26" viewBox="0 0 36 26">${fxLogo}</svg></task-button>
      <task-button running>
        <svg width="32" height="32" viewBox="0 0 32 32"><path d="M17 4h13v23H17z" fill="#fff" stroke="#2b579a"/><path d="M18 8.500h9M18 12.500h9M18 16.500h9M18 20.500h9M18 24.500h9" stroke="#2b579a" stroke-width="1.500"/><path d="M1 4l17-3v30L1 28z" fill="#2b579a"/><text x="3" y="21" font-family="Liberation Sans, sans-serif" font-weight="bold" font-size="14" textLength="12" lengthAdjust="spacingAndGlyphs" fill="#fff">W</text></svg>
      </task-button>
      <div class="tray">
        <fit-label w="16" style="margin:-6px 16px 0 0;font-size:12px">RU</fit-label>
        <svg width="8" height="4" style="margin:4px 13px 0 3px"><path d="M0 4h7L3.500 0z" fill="#fff"/></svg>
        <svg width="15" height="12" style="margin-right:9px"><path d="M0 10h2v2H0zM3 8h2v4H3zM6 6h2v6H6zM9 3h2v9H9zM12 0h2v12h-2z" fill="#fff"/></svg>
        <svg width="15" height="14" style="margin-right:9px"><path d="M1 0v14" stroke="#fff" stroke-width="1.500"/><path d="M3 1h5l1 2 5 1-2 4H8L7 7H3z" fill="#fff"/></svg>
        <svg width="15" height="15" style="margin-right:11px"><path d="M9 2H6V0H3v2H1v12h9v-3" fill="none" stroke="#fff" stroke-width="1.500"/><path d="M3 7h4v5H3z" fill="#ccc"/><path d="M5 3h9v3l-2 3H8L6 6zM7 0h2v3H7zM11 0h2v3h-2zM9 9h2v5H9z" fill="#fff"/></svg>
        <svg width="14" height="14" style="margin-right:19px"><path d="M0 4h3l4-4v14l-4-4H0z" fill="#fff"/><path d="M9 4q3 3 0 6" fill="none" stroke="#999"/></svg>
        <div class="date"><fit-label w="39">ПТ, 19</fit-label><fit-label w="23">ДЕК</fit-label></div>
        <div class="clock">
          <div><fit-label w="66">09:09</fit-label></div>
          <svg class="mirror" aria-hidden="true" viewBox="0 0 66 14">
            <defs><linearGradient id="m" gradientUnits="userSpaceOnUse" x1="0" y1="0" x2="0" y2="14"><stop offset="0" stop-color="#888"/><stop offset="1" stop-color="#1a1a1a"/></linearGradient></defs>
            <g fill="none" stroke="url(#m)" stroke-width="4"><path d="M3 12V5q0-3 3-3h4q3 0 3 3v7M18 2h5q4 0 4 4v6M18 10h9M42 12V5q0-3 3-3h4q3 0 3 3v7M54 2h5q4 0 4 4v6M54 10h9M32 3h4M32 10h4"/></g>
          </svg>
        </div>
        <div class="desk"></div>
      </div>
    `;
  }
}

class TerminalWindow extends HTMLElement {
  constructor() {
    super();
    this.attachShadow({mode: 'open'});
    this.shadowRoot.innerHTML = `
      <style>
        :host { display: flex; flex-direction: column; width: 1366px; height: 768px; overflow: hidden; }
        title-bar, menu-bar, tool-bar, price-chart, chart-tabs, status-bar, task-bar { flex: none; }
      </style>
      <title-bar></title-bar>
      <menu-bar></menu-bar>
      <tool-bar></tool-bar>
      <price-chart></price-chart>
      <chart-tabs></chart-tabs>
      <status-bar></status-bar>
      <task-bar></task-bar>
    `;
  }
}

customElements.define('tool-button', ToolButton);
customElements.define('tool-separator', ToolSeparator);
customElements.define('tool-bar', ToolBar);
customElements.define('title-bar', TitleBar);
customElements.define('menu-bar', MenuBar);
customElements.define('trade-panel', TradePanel);
customElements.define('price-chart', PriceChart);
customElements.define('chart-tabs', ChartTabs);
customElements.define('status-bar', StatusBar);
customElements.define('task-button', TaskButton);
customElements.define('task-bar', TaskBar);
customElements.define('terminal-window', TerminalWindow);
</script>
</body>
</html>
